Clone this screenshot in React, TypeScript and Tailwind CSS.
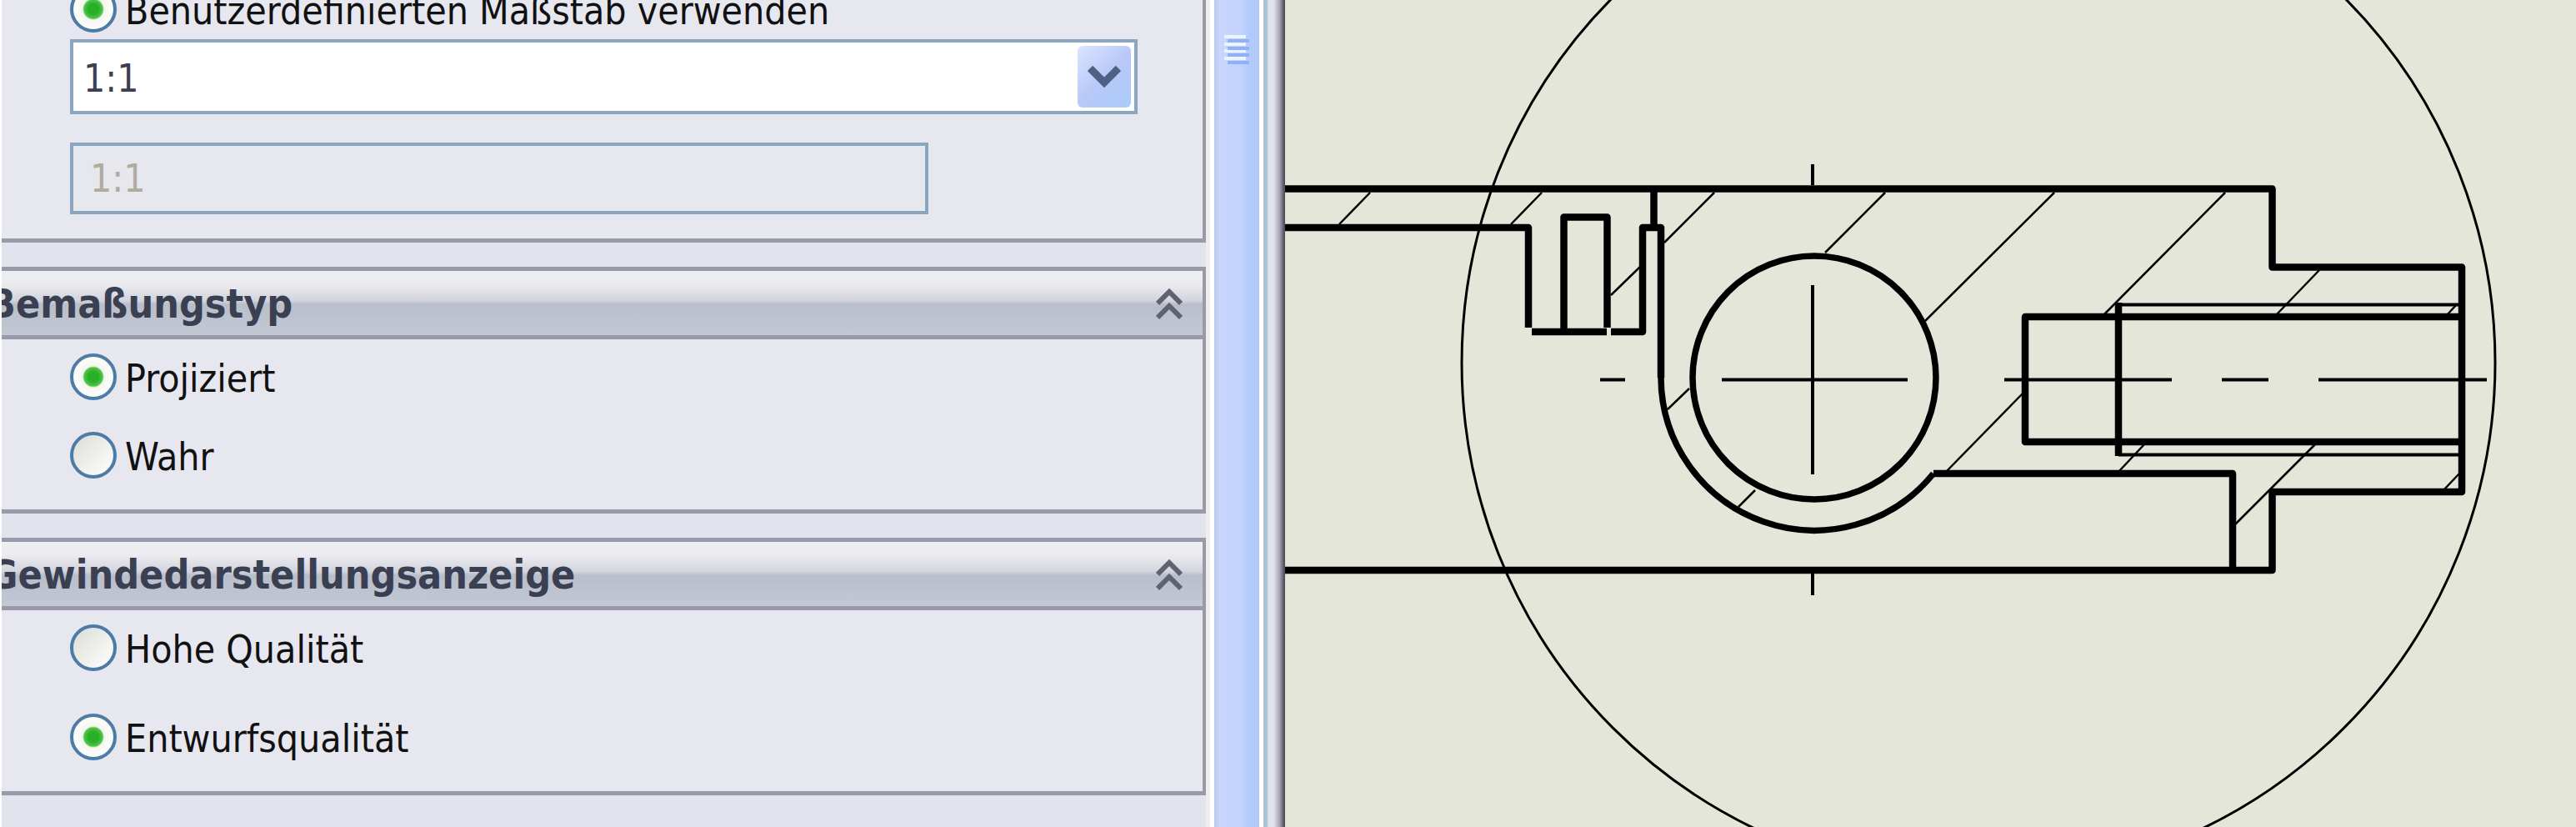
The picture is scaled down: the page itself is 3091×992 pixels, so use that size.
import { useId } from "react";
import type { ReactNode } from "react";

const uiFont = "font-['DejaVu_Sans_Condensed','DejaVu_Sans',sans-serif] [font-stretch:condensed]";

interface RadioRowProps {
  name: string;
  label: string;
  checked?: boolean;
}

function RadioRow({ name, label, checked }: RadioRowProps) {
  const id = useId();
  return (
    <div className="flex h-14 items-center gap-2.5">
      <input
        id={id}
        type="radio"
        name={name}
        defaultChecked={checked}
        className="size-14 shrink-0 appearance-none rounded-full border-4 border-[#4c7ba6] bg-[linear-gradient(135deg,#dcdcd6,#fff)] checked:bg-[radial-gradient(circle,#2aae28_0_6px,#4cc448_11px,#f4f6f0_13px,#fbfbf8_20px)]"
      />
      <label htmlFor={id} className="pt-1 text-[46px] leading-14 whitespace-nowrap text-[#111]">
        {label}
      </label>
    </div>
  );
}

function CollapseIcon() {
  return (
    <svg viewBox="0 0 32 40" className="h-10 w-8" fill="none" stroke="#60636f" strokeWidth="6">
      <path d="M2 20 16 6 30 20M2 37 16 23 30 37" />
    </svg>
  );
}

interface SectionProps {
  title: string;
  children: ReactNode;
}

function Section({ title, children }: SectionProps) {
  return (
    <section className="border-y-[5px] border-r-4 border-[#9899a9] bg-[#e7e7f0]">
      <header className="flex h-[82px] items-center justify-between border-b-[5px] border-[#9899a9] bg-[linear-gradient(#eeeff3_0%,#ececf0_20%,#dddee5_35%,#d2d5de_46%,#b8bfcb_52%,#c2c8d4_100%)] pr-6">
        <h2 className="-ml-4 text-[48px] leading-none font-bold whitespace-nowrap text-[#3b3f52]">{title}</h2>
        <button type="button" aria-label={`${title} einklappen`}>
          <CollapseIcon />
        </button>
      </header>
      {children}
    </section>
  );
}

function ScaleSection() {
  return (
    <section className="h-[291px] overflow-hidden border-r-4 border-b-[5px] border-[#9899a9] bg-[#e7e7f0] pl-[82px]">
      <div className="-mt-[17px]">
        <RadioRow name="scale" label="Benutzerdefinierten Maßstab verwenden" checked />
      </div>
      <div className="mt-2 mr-[78px] grid h-[90px] border-4 border-[#8aa6c1] bg-white">
        <select
          aria-label="Maßstab"
          className="col-start-1 row-start-1 appearance-none bg-transparent pt-1 pl-3 text-[46px] leading-none text-[#3b3f52]"
        >
          <option>1:1</option>
        </select>
        <span className="pointer-events-none col-start-1 row-start-1 mr-1 flex h-[74px] w-16 items-center justify-center self-center justify-self-end rounded-md bg-[linear-gradient(135deg,#dce6ff,#b9c8f8_50%,#a9cbfa)]">
          <svg viewBox="0 0 40 28" className="h-7 w-10" fill="none" stroke="#4d6185" strokeWidth="9">
            <path d="M3 4 20 21 37 4" />
          </svg>
        </span>
      </div>
      <input
        type="text"
        aria-label="Benutzerdefinierter Maßstab"
        defaultValue="1:1"
        disabled
        className="mt-[34px] block h-[86px] w-[1030px] border-4 border-[#8aa6c1] bg-[#e7e7ee] px-5 text-[46px] leading-none text-[#aeac9e]"
      />
    </section>
  );
}

function Scrollbar() {
  return (
    <div className="flex w-[64px] shrink-0 border-x-[5px] border-white bg-[linear-gradient(90deg,#b9c9f6,#c9d7fc_12%,#c2d2fd_60%,#b0cbfc_80%,#b4c7f6)] pl-3">
      <svg viewBox="0 0 30 36" className="mt-[42px] h-9 w-[30px]" strokeWidth="4">
        <path stroke="#eef4ff" d="M0 2H26M0 11H26M0 19H26M0 28H26" />
        <path stroke="#8fb1fa" d="M4 7H30M4 16H30M4 24H30M4 33H30" />
      </svg>
    </div>
  );
}

function SectionDrawing() {
  return (
    <svg
      viewBox="1542 0 1549 992"
      preserveAspectRatio="xMinYMin slice"
      className="h-full w-full"
      fill="none"
      stroke="#000"
      role="img"
      aria-label="Schnittansicht"
    >
      {/* detail circle */}
      <circle cx="2374" cy="435" r="620" strokeWidth="3" />

      {/* visible edges */}
      <g strokeWidth="8.5" strokeLinejoin="round">
        <path d="M1542 226.5H2726.5V320.5H2954V590H2726.5V684H1542" />
        <path d="M1542 273H1834V393M1838 398H1928M1933 398H1971V273H1993V453M2320 568H2679V684" />
        <path d="M1876.5 398V260.5H1928.5V393M1984.5 226.5V273" />
        <path d="M2954 380H2430V530H2954M2542 363V547" />
      </g>
      <g strokeWidth="7.5">
        <path d="M1993 453A184 184 0 0 0 2320 568" />
        <circle cx="2177" cy="453" r="146" />
      </g>

      {/* thread and centre lines */}
      <g strokeWidth="4">
        <path d="M2542 365.5H2954M2542 545.5H2954" />
        <path d="M2175 197V222M2175 342V569M2175 688V714" />
        <path d="M1920 455.5H1950M2066 455.5H2289M2405 455.5H2606M2666 455.5H2722M2782 455.5H2984" />
      </g>

      {/* hatching */}
      <g strokeWidth="2.5">
        <path d="M1607 269 1644 231M1813 269 1850 231M1933 354 1968 320M1997 291 2057 231M2190 303 2262 231" />
        <path d="M2310 385 2465 231M2524 378 2670 231M2731 378 2783 324M2936 378 2948 365" />
        <path d="M2001 491 2027 466M2086 608 2106 588M2335 566 2427 472M2542 566 2573 533M2682 629 2778 533M2932 588 2951 568" />
      </g>
    </svg>
  );
}

export default function App() {
  return (
    <div className={`flex h-screen overflow-hidden border-l-2 border-white bg-[#e1e4ec] ${uiFont}`}>
      <aside className="flex w-[1540px] shrink-0">
        <div className="flex flex-1 flex-col gap-[29px]">
          <ScaleSection />
          <Section title="Bemaßungstyp">
            <div className="flex flex-col gap-[38px] pt-[17px] pb-[37px] pl-[82px]">
              <RadioRow name="dimension" label="Projiziert" checked />
              <RadioRow name="dimension" label="Wahr" />
            </div>
          </Section>
          <Section title="Gewindedarstellungsanzeige">
            <div className="flex flex-col gap-[51px] pt-[17px] pb-[37px] pl-[82px]">
              <RadioRow name="thread" label="Hohe Qualität" />
              <RadioRow name="thread" label="Entwurfsqualität" checked />
            </div>
          </Section>
        </div>
        <div className="w-[5px] bg-[#efeeea]" />
        <Scrollbar />
        <div className="w-[26px] bg-[linear-gradient(90deg,#a9c2d6_0_4px,#e1e4ec_6px_12px,#a9aaba_19px,#4f4e5d_25px)]" />
      </aside>
      <main className="min-w-0 flex-1 bg-[#e5e6da]">
        <SectionDrawing />
      </main>
    </div>
  );
}
